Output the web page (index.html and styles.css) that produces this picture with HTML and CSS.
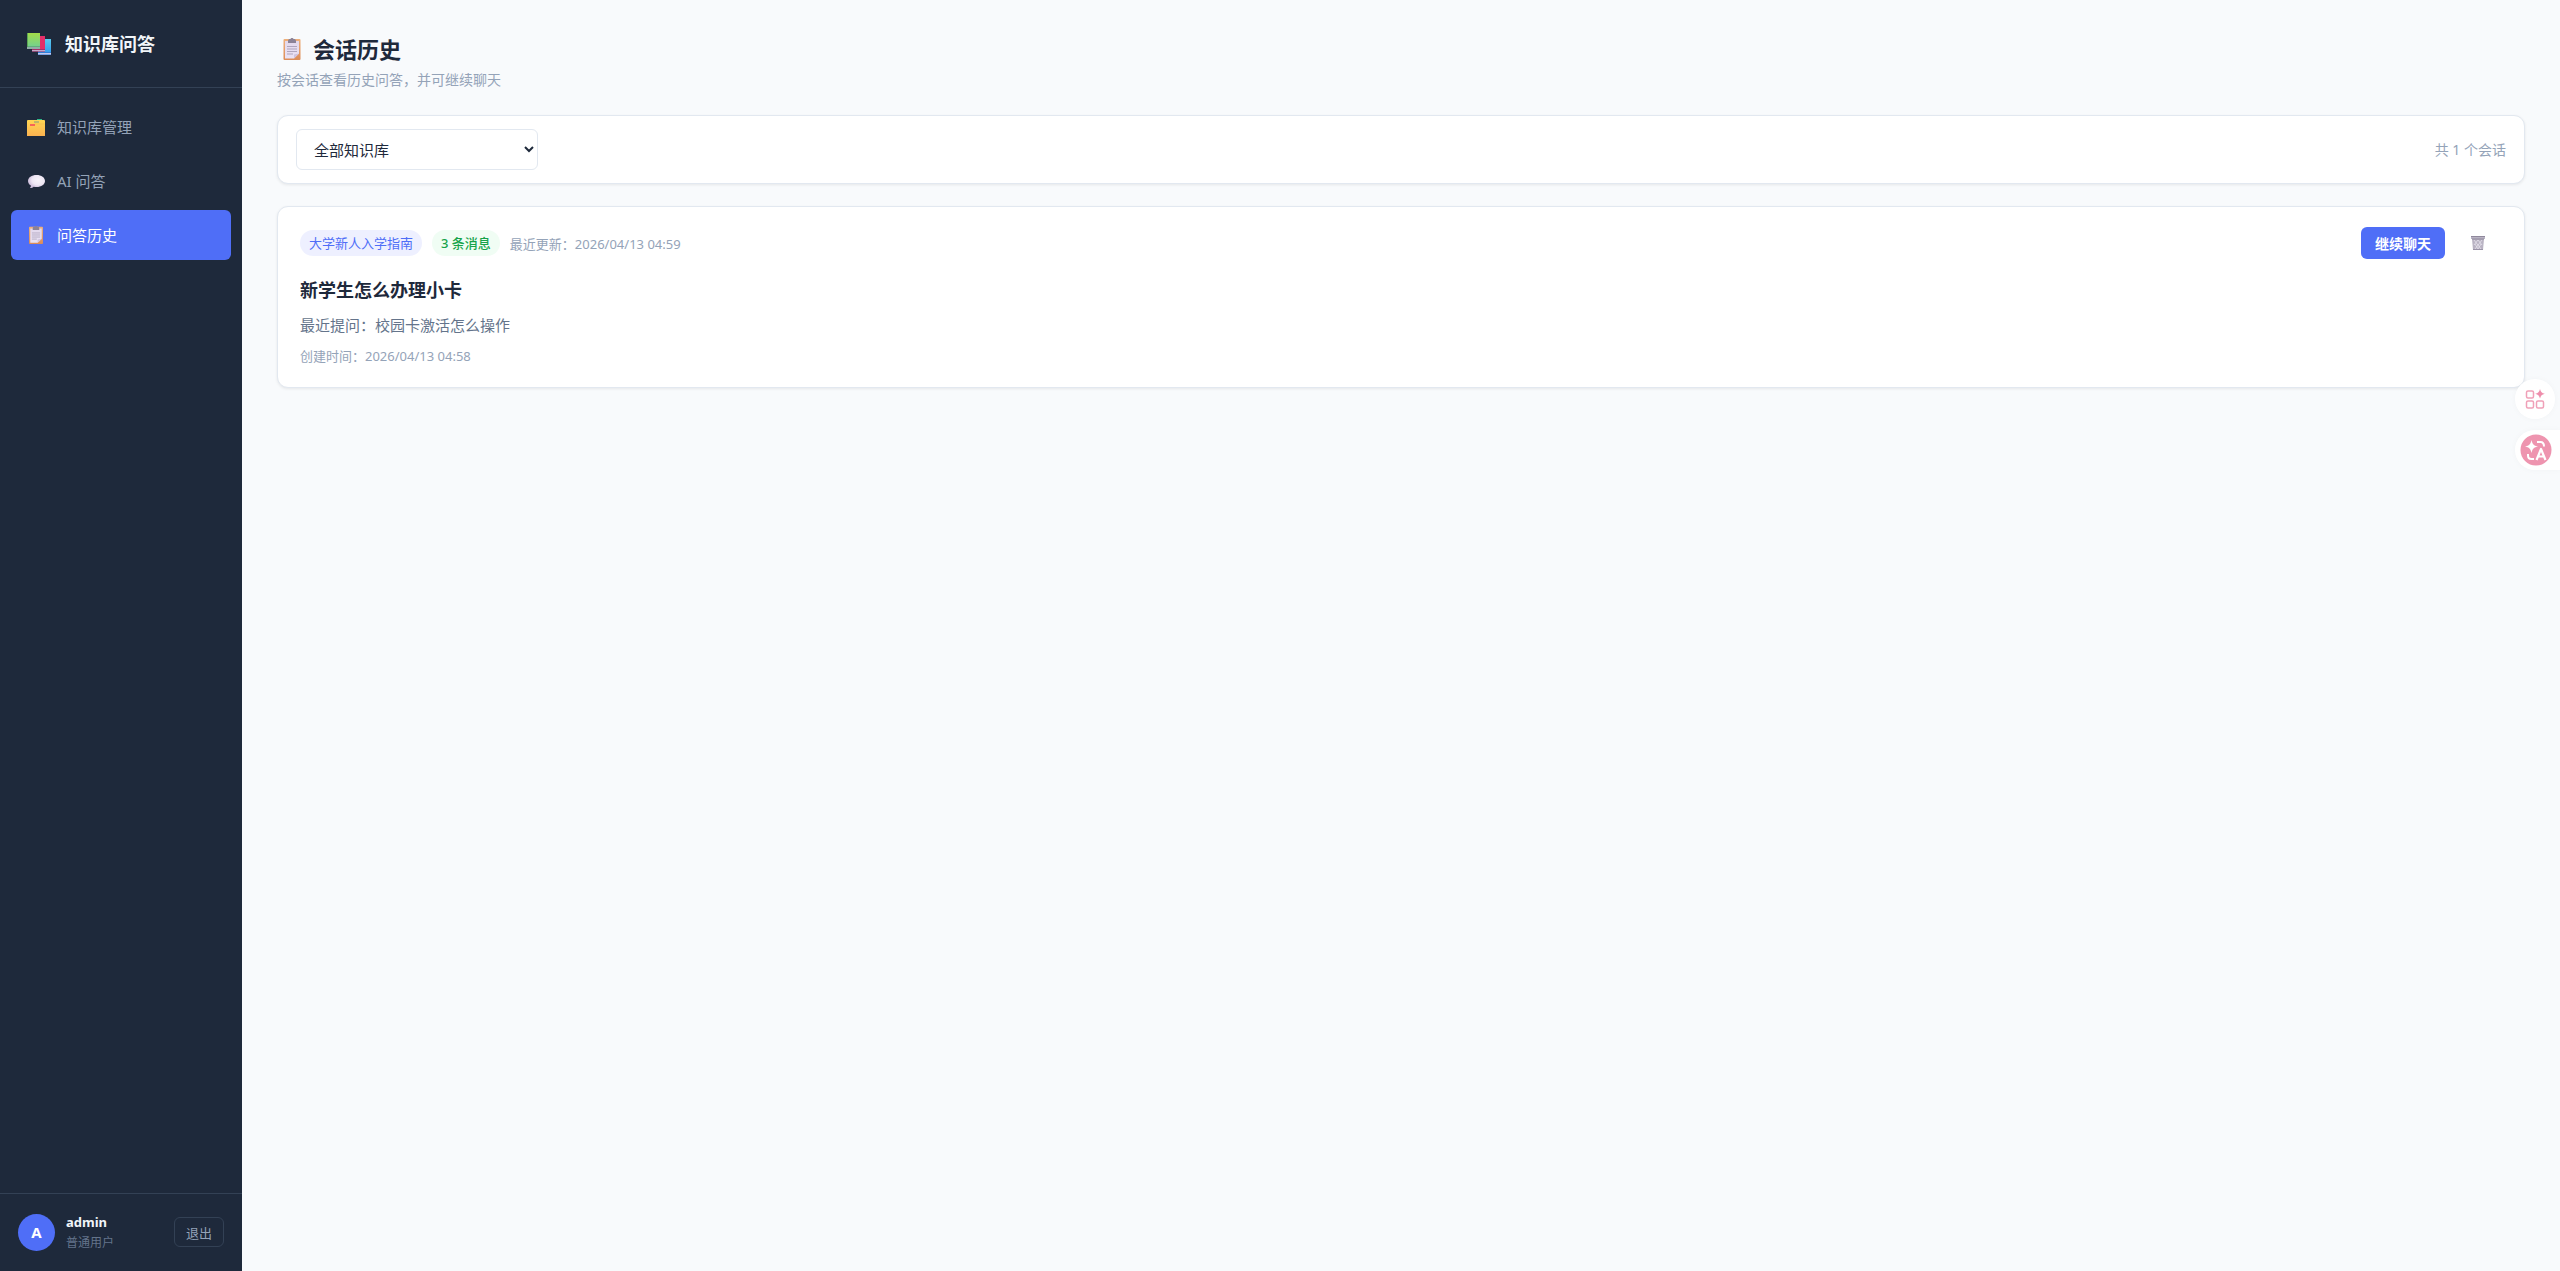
FILE: index.html
```html
<!DOCTYPE html>
<html lang="zh-CN">
<head>
    <meta charset="UTF-8">
    <meta name="viewport" content="width=device-width, initial-scale=1.0">
    <title>知识库问答</title>
    <link rel="stylesheet" href="styles.css">
</head>
<body>
    <svg class="sprite" aria-hidden="true">
        <defs>
            <linearGradient id="board" x1="0" y1="0" x2="0" y2="1">
                <stop offset="0" stop-color="#eeb07c"/>
                <stop offset="1" stop-color="#dc8c58"/>
            </linearGradient>
            <linearGradient id="paper" x1="0" y1="0" x2="0" y2="1">
                <stop offset="0" stop-color="#e2d8ec"/>
                <stop offset="1" stop-color="#eae2f4"/>
            </linearGradient>
        </defs>
        <symbol id="clipboard" viewBox="0 0 18 22">
            <rect x="0.5" y="1" width="17" height="21" rx="1" fill="url(#board)"/>
            <path d="M2 3h14v12.500l-5 5H2z" fill="url(#paper)"/>
            <path d="M11 20.500v-4l5-1z" fill="#cfc2de"/>
            <path d="M5 3c0-1.500 1-2 2.500-2 .3-1.300 2.700-1.300 3 0 1.500 0 2.500.5 2.500 2v2H5z" fill="#8b8296"/>
            <path d="M4 8.500h10M4 11h10M4 13.500h10M4 16h6" stroke="#afa5bd" stroke-width="1"/>
        </symbol>
    </svg>

    <div class="layout">
        <aside class="sidebar">
            <div class="logo">
                <svg class="logo-icon" viewBox="0 0 26 24" aria-hidden="true">
                    <defs>
                        <linearGradient id="green" x1="0" y1="0" x2="0" y2="1">
                            <stop offset="0" stop-color="#a4dc48"/>
                            <stop offset="1" stop-color="#72d090"/>
                        </linearGradient>
                        <linearGradient id="blue" x1="0" y1="0" x2="0" y2="1">
                            <stop offset="0" stop-color="#59cbee"/>
                            <stop offset="1" stop-color="#369ced"/>
                        </linearGradient>
                    </defs>
                    <path d="M12 7h13v14H12z" fill="url(#blue)"/>
                    <path d="M12 21h13v2H12z" fill="#c5c8ee"/>
                    <path d="M12 20h13v1H12zM12 22.500h13v.5H12z" fill="#347fd6"/>
                    <path d="M6 4h13v14H6z" fill="#e42f69"/>
                    <path d="M6 18h13v1.500H6z" fill="#c6a9c9"/>
                    <path d="M6 17h13v1H6zM6 19.500h13v.5H6z" fill="#a82c68"/>
                    <path d="M1 1h13v14H1z" fill="url(#green)"/>
                    <path d="M1 1h1v16H1z" fill="#5ba653"/>
                    <path d="M1 15h13v2H1z" fill="#d3cfe5"/>
                    <path d="M1 14.500h13v1H1zM1 16.500h13v.5H1z" fill="#518a68"/>
                </svg>
                <span class="logo-text">知识库问答</span>
            </div>

            <nav class="nav">
                <a class="nav-item" href="#knowledge">
                    <svg class="nav-icon" viewBox="0 0 20 20" aria-hidden="true">
                        <defs>
                            <linearGradient id="folder" x1="0" y1="0" x2="0" y2="1">
                                <stop offset="0" stop-color="#ffd653"/>
                                <stop offset="1" stop-color="#fbb250"/>
                            </linearGradient>
                        </defs>
                        <path d="M11 2h5v3h-5z" fill="#2fb98a"/>
                        <path d="M2 3h16a1 1 0 0 1 1 1v15H1V4a1 1 0 0 1 1-1z" fill="url(#folder)"/>
                        <path d="M8 5h5" stroke="#7c9c80" stroke-width="1"/>
                        <path d="M4 8h5" stroke="#f3425c" stroke-width="1.500"/>
                        <path d="M9 7h10" stroke="#eebb4c" stroke-width="0.500"/>
                    </svg>
                    <span>知识库管理</span>
                </a>
                <a class="nav-item" href="#chat">
                    <svg class="nav-icon" viewBox="0 0 20 20" aria-hidden="true">
                        <defs>
                            <radialGradient id="bubble" cx="0.6" cy="0.4" r="0.6">
                                <stop offset="0" stop-color="#f7f3fa"/>
                                <stop offset="0.6" stop-color="#eee7f4"/>
                                <stop offset="1" stop-color="#cdbddb"/>
                            </radialGradient>
                        </defs>
                        <path d="M10.500 4c5 0 8.500 2.600 8.500 6s-3.500 6-8.500 6c-1 0-2-.1-2.800-.3-.8.8-2 1.300-3.700 1.300.7-.7 1-1.600.9-2.500C3 13.500 2 11.900 2 10c0-3.400 3.500-6 8.500-6z" fill="url(#bubble)"/>
                    </svg>
                    <span>AI 问答</span>
                </a>
                <a class="nav-item active" href="#history" aria-current="page">
                    <svg class="nav-icon" viewBox="0 0 20 20" aria-hidden="true"><use href="#clipboard" x="2" y="1" width="16" height="18"/></svg>
                    <span>问答历史</span>
                </a>
            </nav>

            <div class="user">
                <div class="avatar">A</div>
                <div class="user-info">
                    <div class="user-name">admin</div>
                    <div class="user-role">普通用户</div>
                </div>
                <button class="logout" type="button">退出</button>
            </div>
        </aside>

        <main class="main">
            <header class="page-header">
                <h1><svg class="title-icon" viewBox="0 0 18 22" aria-hidden="true"><use href="#clipboard"/></svg>会话历史</h1>
                <p>按会话查看历史问答，并可继续聊天</p>
            </header>

            <section class="card toolbar">
                <select class="kb-select" aria-label="选择知识库">
                    <option>全部知识库</option>
                    <option>大学新人入学指南</option>
                </select>
                <span class="count">共 1 个会话</span>
            </section>

            <article class="card session">
                <div class="session-top">
                    <span class="badge badge-kb">大学新人入学指南</span>
                    <span class="badge badge-count">3 条消息</span>
                    <span class="time">最近更新：2026/04/13 04:59</span>
                    <div class="actions">
                        <button class="continue" type="button">继续聊天</button>
                        <button class="delete" type="button" aria-label="删除">
                            <svg viewBox="0 0 16 16" aria-hidden="true">
                                <path d="M1 1h14v3h-1l-1 11H3L2 4H1z" fill="#b9b3c3"/>
                                <path d="M1 1.500h14M2 4h12" stroke="#8f889c" stroke-width="1"/>
                                <path d="M4 5l7 9M8 5l4 5M5 9l3 5M12 5l-7 9M8 5l-4 5M11 9l-3 5" stroke="#e6e2ec" stroke-width="0.800"/>
                                <path d="M3 14.500h10" stroke="#9a93a7" stroke-width="1"/>
                            </svg>
                        </button>
                    </div>
                </div>
                <h2>新学生怎么办理小卡</h2>
                <p class="question">最近提问：校园卡激活怎么操作</p>
                <p class="created">创建时间：2026/04/13 04:58</p>
            </article>
        </main>
    </div>

    <!-- Floating tools on the right edge -->
    <div class="float-tools">
        <button class="float-apps" type="button" aria-label="工具">
            <svg viewBox="0 0 20 20" fill="none" stroke="#f0a0b8" stroke-width="1.500" aria-hidden="true">
                <rect x="1.500" y="2" width="7" height="7" rx="1.500"/>
                <rect x="1.500" y="12" width="7" height="7" rx="1.500"/>
                <rect x="11.500" y="12" width="7" height="7" rx="1.500"/>
                <path d="M15 0c.8 3 1.800 4 4.800 4.800-3 .8-4 1.800-4.800 4.800-.8-3-1.800-4-4.800-4.800C13.200 4 14.200 3 15 0z" fill="#ee8dab" stroke="none"/>
            </svg>
        </button>
        <button class="float-translate" type="button" aria-label="翻译">
            <svg viewBox="0 0 32 32" fill="none" stroke="#fff" stroke-width="2" stroke-linejoin="round" aria-hidden="true">
                <circle cx="16" cy="16" r="15.500" fill="#ee94af" stroke="none"/>
                <path d="M11.500 6c1 4.400 2.200 5.600 6.500 6.500-4.300 1-5.500 2.200-6.500 6.500-1-4.300-2.200-5.500-6.500-6.500 4.300-.9 5.500-2.100 6.500-6.500z" fill="#fff" stroke="none"/>
                <path d="M17 8h3.500c2.500 0 3.500 1 3.500 4.500M8 20v1.500c0 2.500 1 3.500 3.500 3.500H14"/>
                <path d="M16.500 26l4.500-11 4.500 11M18 22.500h6" stroke-width="2.200"/>
            </svg>
        </button>
    </div>
</body>
</html>
```

FILE: styles.css
```css
* {
    box-sizing: border-box;
    margin: 0;
    padding: 0;
}

body {
    font-family: "Noto Sans", "Noto Sans CJK SC", sans-serif;
    font-size: 15px;
    background: #f8fafc;
    color: #1e293b;
}

button,
select {
    font-family: inherit;
    cursor: pointer;
}

.sprite {
    position: absolute;
    width: 0;
    height: 0;
}

.layout {
    display: flex;
    min-height: 100vh;
}

/* Sidebar */
.sidebar {
    display: flex;
    flex-direction: column;
    width: 242px;
    flex-shrink: 0;
    background: #1e293b;
}

.logo {
    display: flex;
    align-items: center;
    gap: 13px;
    height: 88px;
    padding: 0 26px;
    border-bottom: 1px solid #334155;
}

.logo-icon {
    width: 26px;
    height: 24px;
}

.logo-text {
    padding-bottom: 2px;
    font-size: 18px;
    font-weight: 700;
    color: #f1f5f9;
}

.nav {
    flex: 1;
    display: flex;
    flex-direction: column;
    gap: 4px;
    padding: 14px 11px;
}

.nav-item {
    display: flex;
    align-items: center;
    gap: 11px;
    height: 50px;
    padding: 0 15px;
    border-radius: 6px;
    font-size: 15px;
    color: #94a3b8;
    text-decoration: none;
}

.nav-item span {
    padding-bottom: 2px;
}

.nav-item.active {
    background: #4f6ef7;
    color: #fff;
}

.nav-icon {
    width: 20px;
    height: 20px;
}

.user {
    display: flex;
    align-items: center;
    gap: 11px;
    padding: 17px 18px 18px;
    border-top: 1px solid #334155;
}

.avatar {
    width: 37px;
    height: 37px;
    border-radius: 50%;
    background: #4f6ef7;
    color: #fff;
    font-size: 15px;
    font-weight: 700;
    line-height: 37px;
    text-align: center;
}

.user-info {
    flex: 1;
}

.user-name {
    font-size: 13px;
    font-weight: 700;
    line-height: 22px;
    color: #f1f5f9;
}

.user-role {
    font-size: 12px;
    line-height: 20px;
    color: #64748b;
}

.logout {
    height: 30px;
    padding: 0 11px;
    border: 1px solid #334155;
    border-radius: 6px;
    background: none;
    color: #94a3b8;
    font-size: 13px;
}

/* Main */
.main {
    flex: 1;
    min-width: 0;
    padding: 31px 35px;
}

.page-header {
    margin-bottom: 22px;
}

.page-header h1 {
    display: flex;
    align-items: center;
    gap: 12px;
    padding-left: 6px;
    font-size: 22px;
    font-weight: 700;
    line-height: 36px;
}

.title-icon {
    width: 18px;
    height: 22px;
}

.page-header p {
    font-size: 14px;
    line-height: 26px;
    color: #94a3b8;
}

.card {
    background: #fff;
    border: 1px solid #e2e8f0;
    border-radius: 11px;
    box-shadow: 0 1px 3px rgba(0, 0, 0, 0.08);
}

.toolbar {
    display: flex;
    align-items: center;
    justify-content: space-between;
    padding: 13px 18px;
    margin-bottom: 22px;
}

.kb-select {
    width: 242px;
    height: 41px;
    padding: 0 13px;
    border: 1px solid #e2e8f0;
    border-radius: 6px;
    background: #fff;
    color: #1e293b;
    font-size: 15px;
}

.count {
    padding-bottom: 2px;
    font-size: 14px;
    color: #94a3b8;
}

/* Session card */
.session {
    padding: 20px 22px;
}

.session-top {
    display: flex;
    align-items: center;
    gap: 10px;
    margin-bottom: 15px;
}

.badge {
    padding: 0 9px;
    border-radius: 13px;
    font-size: 13px;
    line-height: 26px;
}

.badge-kb {
    background: #eef0ff;
    color: #4f6ef7;
}

.badge-count {
    background: #f0fdf4;
    color: #16a34a;
    font-weight: 500;
}

.time,
.created {
    font-size: 13px;
    color: #94a3b8;
}

.actions {
    display: flex;
    gap: 9px;
    margin-left: auto;
}

.continue {
    height: 32px;
    padding: 0 14px;
    border: none;
    border-radius: 6px;
    background: #4f6ef7;
    color: #fff;
    font-size: 14px;
    font-weight: 600;
}

.delete {
    width: 48px;
    height: 32px;
    border: none;
    background: none;
}

.delete svg {
    display: block;
    width: 16px;
    height: 16px;
    margin: 0 auto;
}

.session h2 {
    margin-bottom: 6px;
    font-size: 18px;
    font-weight: 700;
    line-height: 32px;
}

.question {
    margin-bottom: 7px;
    font-size: 15px;
    line-height: 26px;
    color: #64748b;
}

.created {
    line-height: 22px;
}

/* Floating tools */
.float-tools {
    position: fixed;
    top: 379px;
    right: 0;
    display: flex;
    flex-direction: column;
    gap: 11px;
}

.float-apps,
.float-translate {
    display: flex;
    align-items: center;
    height: 40px;
    border: none;
    background: #fff;
    box-shadow: 0 0 6px rgba(0, 0, 0, 0.03);
}

.float-apps {
    width: 40px;
    justify-content: center;
    border-radius: 50%;
}

.float-apps svg {
    width: 20px;
    height: 20px;
}

.float-translate {
    width: 45px;
    padding-left: 5px;
    border-radius: 20px 0 0 20px;
}

.float-translate svg {
    width: 32px;
    height: 32px;
}
```
